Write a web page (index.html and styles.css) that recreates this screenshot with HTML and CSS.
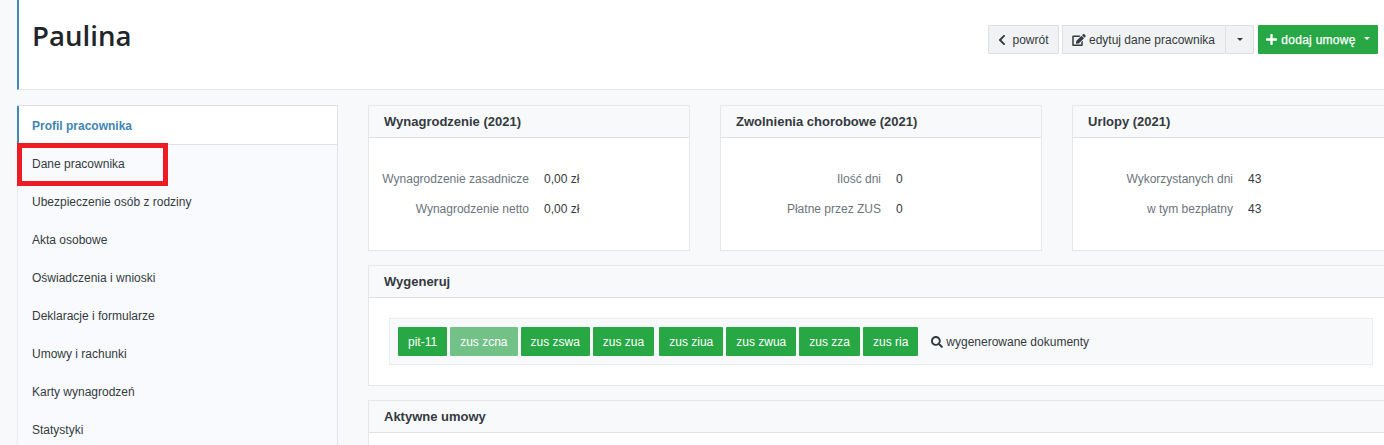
FILE: index.html
```html
<!DOCTYPE html>
<html lang="pl">
<head>
  <meta charset="UTF-8" />
  <title>Paulina - profil pracownika</title>
  <link rel="stylesheet" href="styles.css">
</head>
<body>
<div class="page">
  <div class="page-header">
    <h1 class="title">Paulina</h1>
    <div class="actions">
      <a class="btn btn-light btn-back">
        <svg class="ico ico-back" viewBox="0 0 320 512"><path d="M34.52 239.03L228.87 44.69c9.37-9.37 24.57-9.37 33.94 0l22.67 22.67c9.36 9.36 9.37 24.52.04 33.9L131.49 256l154.02 154.75c9.34 9.38 9.32 24.54-.04 33.9l-22.67 22.67c-9.37 9.37-24.57 9.37-33.94 0L34.52 272.97c-9.37-9.37-9.37-24.57 0-33.94z"/></svg>
        powrót
      </a>
      <div class="btn-group">
        <a class="btn btn-light btn-edit">
          <svg class="ico ico-edit" viewBox="0 0 576 512"><path d="M402.6 83.2l90.2 90.2c3.8 3.8 3.8 10 0 13.8L274.4 405.6l-92.8 10.3c-12.4 1.4-22.9-9.1-21.5-21.5l10.3-92.8L388.8 83.2c3.8-3.8 10-3.8 13.8 0zm162-22.9l-48.8-48.8c-15.2-15.2-39.9-15.2-55.2 0l-35.4 35.4c-3.8 3.8-3.8 10 0 13.8l90.2 90.2c3.8 3.8 10 3.8 13.8 0l35.4-35.4c15.2-15.3 15.2-40 0-55.2zM384 346.2V448H64V128h229.8c3.2 0 6.2-1.3 8.5-3.5l40-40c7.6-7.6 2.2-20.5-8.5-20.5H48C21.5 64 0 85.5 0 112v352c0 26.5 21.5 48 48 48h352c26.5 0 48-21.5 48-48V306.2c0-10.7-12.9-16-20.5-8.5l-40 40c-2.2 2.3-3.5 5.3-3.5 8.5z"/></svg>
          edytuj dane pracownika
        </a>
        <a class="btn btn-light btn-caret"><span class="caret"></span></a>
      </div>
      <a class="btn btn-green btn-add">
        <svg class="ico ico-plus" viewBox="0 0 448 512"><path d="M416 208H272V64c0-17.67-14.33-32-32-32h-32c-17.67 0-32 14.33-32 32v144H32c-17.67 0-32 14.33-32 32v32c0 17.67 14.33 32 32 32h144v144c0 17.67 14.33 32 32 32h32c17.67 0 32-14.33 32-32V304h144c17.67 0 32-14.33 32-32v-32c0-17.67-14.33-32-32-32z"/></svg>
        dodaj umowę
        <span class="caret caret-add"></span>
      </a>
    </div>
  </div>

  <div class="content">
    <ul class="side-menu">
      <li class="side-item active">Profil pracownika</li>
      <li class="side-item">Dane pracownika<span class="marker"></span></li>
      <li class="side-item">Ubezpieczenie osób z rodziny</li>
      <li class="side-item">Akta osobowe</li>
      <li class="side-item">Oświadczenia i wnioski</li>
      <li class="side-item">Deklaracje i formularze</li>
      <li class="side-item">Umowy i rachunki</li>
      <li class="side-item">Karty wynagrodzeń</li>
      <li class="side-item">Statystyki</li>
    </ul>

    <div class="main">
      <div class="stats">
        <div class="card">
          <div class="card-head">Wynagrodzenie (2021)</div>
          <dl class="stat-list">
            <dt>Wynagrodzenie zasadnicze</dt><dd>0,00 zł</dd>
            <dt>Wynagrodzenie netto</dt><dd>0,00 zł</dd>
          </dl>
        </div>
        <div class="card">
          <div class="card-head">Zwolnienia chorobowe (2021)</div>
          <dl class="stat-list">
            <dt>Ilość dni</dt><dd>0</dd>
            <dt>Płatne przez ZUS</dt><dd>0</dd>
          </dl>
        </div>
        <div class="card">
          <div class="card-head">Urlopy (2021)</div>
          <dl class="stat-list">
            <dt>Wykorzystanych dni</dt><dd>43</dd>
            <dt>w tym bezpłatny</dt><dd>43</dd>
          </dl>
        </div>
      </div>

      <div class="card">
        <div class="card-head">Wygeneruj</div>
        <div class="card-body">
          <div class="doc-bar">
            <a class="btn btn-green btn-doc">pit-11</a>
            <a class="btn btn-green btn-doc disabled">zus zcna</a>
            <a class="btn btn-green btn-doc">zus zswa</a>
            <a class="btn btn-green btn-doc">zus zua</a>
            <a class="btn btn-green btn-doc btn-gap">zus ziua</a>
            <a class="btn btn-green btn-doc">zus zwua</a>
            <a class="btn btn-green btn-doc">zus zza</a>
            <a class="btn btn-green btn-doc">zus ria</a>
            <a class="doc-link">
              <svg class="ico ico-search" viewBox="0 0 512 512"><path d="M505 442.7L405.3 343c-4.5-4.5-10.6-7-17-7H372c27.6-35.3 44-79.7 44-128C416 93.1 322.9 0 208 0S0 93.1 0 208s93.1 208 208 208c48.3 0 92.7-16.4 128-44v16.3c0 6.4 2.5 12.5 7 17l99.7 99.7c9.4 9.4 24.6 9.4 33.9 0l28.3-28.3c9.4-9.4 9.4-24.6.1-34zM208 336c-70.7 0-128-57.2-128-128 0-70.7 57.2-128 128-128 70.7 0 128 57.2 128 128 0 70.7-57.2 128-128 128z"/></svg>
              wygenerowane dokumenty
            </a>
          </div>
        </div>
      </div>

      <div class="card">
        <div class="card-head">Aktywne umowy</div>
        <div class="card-empty"></div>
      </div>
    </div>
  </div>
</div>
</body>
</html>
```

FILE: styles.css
```css
html, body {
  height: 100%;
  overflow: hidden;
}
body {
  margin: 0;
  background: #f8f9fb;
  font-family: 'Liberation Sans', Arial, sans-serif;
  font-size: 12px;
  color: #343a40;
}
.page {
  padding-left: 17px;
}
.page-header {
  display: flex;
  justify-content: space-between;
  box-sizing: border-box;
  height: 90px;
  padding: 25px 6px 0 14px;
  background: #fff;
  border-left: 2px solid #3f8ab8;
  border-bottom: 1px solid #e4e7ec;
}
.title {
  margin: -9px 0 0 -1px;
  font-family: 'Open Sans', Arial, sans-serif;
  font-size: 27.6px;
  font-weight: 600;
  line-height: 38px;
  color: #212529;
}
.actions {
  display: flex;
  gap: 3px;
  align-items: flex-start;
}
.btn-group {
  display: flex;
  margin-right: 1px;
}
.btn {
  display: flex;
  align-items: center;
  justify-content: center;
  box-sizing: border-box;
  height: 29px;
  border-radius: 1px;
  white-space: nowrap;
}
.btn-light {
  background: #f1f2f4;
  border: 1px solid #dcdfe3;
  color: #343a40;
}
.btn-green {
  background: #28a745;
  color: #fff;
}
.ico {
  fill: currentColor;
  flex: none;
}
.btn-back { width: 71px; gap: 6px; }
.ico-back { width: 8px; height: 12px; }
.btn-edit { width: 163px; gap: 3px; border-right: 0; }
.ico-edit { width: 14px; height: 12px; margin-left: -1px; }
.btn-caret { width: 29px; }
.btn-add {
  width: 120px;
  gap: 4px;
  letter-spacing: .27px;
  -webkit-text-stroke: .25px #fff;
}
.ico-plus { width: 11px; height: 13px; }
.caret {
  width: 0;
  height: 0;
  margin-top: -1px;
  border-top: 3px solid #343a40;
  border-left: 3.5px solid transparent;
  border-right: 3.5px solid transparent;
}
.caret-add {
  margin: -3px 0 0 4px;
  border-top-color: #fff;
}

.content {
  display: flex;
  gap: 30px;
  margin-top: 15px;
}
.side-menu {
  flex: none;
  width: 321px;
  margin: 0;
  padding: 0;
  list-style: none;
  background: #f9fafd;
  border: 1px solid #dfe2e7;
  border-left-color: #e9ecef;
  box-sizing: border-box;
}
.side-item {
  position: relative;
  height: 38px;
  padding-left: 14px;
  line-height: 38px;
  color: #343a40;
}
.side-item.active {
  margin-left: -1px;
  padding-left: 13px;
  line-height: 40px;
  background: #fff;
  border-left: 2px solid #3f8ab8;
  border-bottom: 1px solid #dfe2e7;
  color: #3f86b4;
  font-weight: 700;
}
.marker {
  position: absolute;
  top: -2px;
  left: -1px;
  width: 151px;
  height: 43px;
  box-sizing: border-box;
  border: 5px solid #ed1c24;
}

.main {
  flex: none;
  width: 1026px;
  display: flex;
  flex-direction: column;
  gap: 14px;
}
.stats {
  display: grid;
  grid-template-columns: repeat(3, 322px);
  gap: 30px;
}
.card {
  background: #fff;
  border: 1px solid #e4e7ec;
}
.card-head {
  height: 31px;
  padding-left: 15px;
  line-height: 31px;
  font-size: 13px;
  font-weight: 700;
  color: #343a40;
  background: #f8f9fb;
  border-bottom: 1px solid #dfe2e7;
}
.stat-list {
  display: grid;
  grid-template-columns: 160px 1fr;
  column-gap: 15px;
  grid-auto-rows: 30px;
  align-items: center;
  margin: 0;
  padding: 26px 0 26px;
}
.stat-list dt {
  text-align: right;
  white-space: nowrap;
  color: #6c757d;
}
.stat-list dd {
  margin: 0;
  color: #343a40;
}
.card-body {
  padding: 20px;
}
.doc-bar {
  display: flex;
  align-items: center;
  gap: 3px;
  height: 47px;
  box-sizing: border-box;
  padding: 0 8px;
  background: #f8f9fb;
  border: 1px solid #e9ecef;
}
.btn-doc {
  padding: 0 10px;
  font-size: 12px;
}
.btn-doc.disabled {
  background: #72c288;
}
.btn-gap {
  margin-left: 2px;
}
.doc-link {
  display: flex;
  align-items: center;
  gap: 3px;
  margin-left: 10px;
  color: #343a40;
}
.ico-search { width: 12px; height: 12px; }
.card-empty {
  height: 60px;
}
```
